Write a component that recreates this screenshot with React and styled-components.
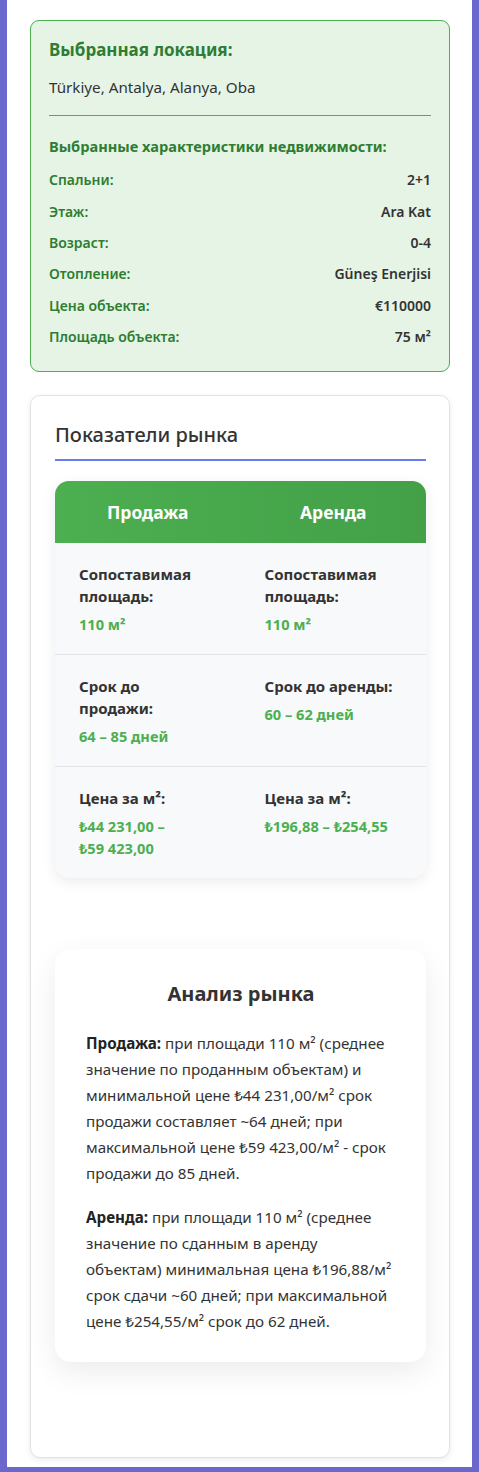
import React from 'react';
import styled, { createGlobalStyle } from 'styled-components';

const GlobalStyle = createGlobalStyle`
    html, body {
        margin: 0;
        padding: 0;
        background: #6a68cc;
    }
    body {
        font-family: 'Noto Sans', 'Open Sans', sans-serif;
        color: #333;
    }
`;

const Page = styled.div`
    background: #fff;
    margin: 0 7px;
    padding: 20px 22px 9px 23px;
    min-height: 1437px;
`;

const SelectionBox = styled.section`
    background: #e6f4e6;
    border: 1px solid #4caf50;
    border-radius: 9px;
    padding: 17px 18px 19px;
    margin-bottom: 23px;
`;

const BoxTitle = styled.h3`
    margin: 0 0 12px;
    font-size: 17px;
    font-weight: 700;
    color: #2e7d32;
    line-height: 24px;
`;

const LocationText = styled.p`
    margin: 0 0 15px;
    font-size: 15.2px;
    line-height: 26px;
    color: #333;
`;

const Divider = styled.hr`
    border: none;
    border-top: 1px solid #4caf50;
    margin: 0 0 19px;
`;

const SubTitle = styled.h4`
    margin: 0 0 7px;
    font-size: 14.6px;
    font-weight: 700;
    color: #2e7d32;
    line-height: 22px;
`;

const SpecRow = styled.div`
    display: flex;
    justify-content: space-between;
    align-items: center;
    height: 31.4px;
    font-size: 14px;
    font-weight: 600;
`;

const SpecLabel = styled.span`
    color: #2e7d32;
`;

const SpecValue = styled.span`
    color: #333;
`;

const MarketCard = styled.section`
    background: #fff;
    border: 1px solid #e2e2e2;
    border-radius: 10px;
    box-shadow: 0 2px 6px rgba(0, 0, 0, 0.08);
    padding: 24px 23px 95px 24px;
`;

const SectionTitle = styled.h2`
    margin: 0 0 20px;
    padding-bottom: 9px;
    border-bottom: 2px solid #667eea;
    font-size: 20px;
    font-weight: 500;
    line-height: 30px;
    color: #333;
`;

const Table = styled.div`
    border-radius: 14px;
    overflow: hidden;
    background: #f8f9fa;
    box-shadow: 0 4px 14px rgba(0, 0, 0, 0.08);
`;

const TableHead = styled.div`
    display: grid;
    grid-template-columns: 1fr 1fr;
    height: 62px;
    align-items: center;
    background: linear-gradient(90deg, #4caf50, #43a047);
`;

const HeadCell = styled.div`
    text-align: center;
    color: #fff;
    font-size: 17.5px;
    font-weight: 700;
`;

const TableRow = styled.div`
    display: grid;
    grid-template-columns: 1fr 1fr;
    border-top: ${(p) => (p.$first ? 'none' : '1px solid #e3e5e8')};
`;

const Cell = styled.div`
    padding: 20px 24px 19px 24px;
`;

const CellLabel = styled.div`
    font-size: 15px;
    font-weight: 700;
    line-height: 22px;
    color: #333;
`;

const CellValue = styled.div`
    margin-top: 6px;
    font-size: 14.6px;
    font-weight: 700;
    line-height: 22px;
    color: #4caf50;
`;

const AnalysisCard = styled.div`
    margin-top: 71px;
    background: #fff;
    border-radius: 16px;
    box-shadow: 0 10px 30px rgba(0, 0, 0, 0.08);
    padding: 30px 30px 28px 31px;
`;

const AnalysisTitle = styled.h3`
    margin: 0 0 21px;
    text-align: center;
    font-size: 20px;
    font-weight: 700;
    line-height: 30px;
    color: #333;
`;

const Paragraph = styled.p`
    margin: 0 0 18px;
    font-size: 15.2px;
    line-height: 26px;
    color: #333;

    &:last-child {
        margin-bottom: 0;
    }

    strong {
        font-weight: 700;
        color: #222;
    }
`;

const specs = [
    ['Спальни:', '2+1'],
    ['Этаж:', 'Ara Kat'],
    ['Возраст:', '0-4'],
    ['Отопление:', 'Güneş Enerjisi'],
    ['Цена объекта:', '€110000'],
    ['Площадь объекта:', '75 м²'],
];

const rows = [
    [
        { label: 'Сопоставимая площадь:', value: '110 м²' },
        { label: 'Сопоставимая площадь:', value: '110 м²' },
    ],
    [
        { label: 'Срок до продажи:', value: '64 – 85 дней' },
        { label: 'Срок до аренды:', value: '60 – 62 дней' },
    ],
    [
        { label: 'Цена за м²:', value: '₺44\u00A0231,00 – ₺59\u00A0423,00' },
        { label: 'Цена за м²:', value: '₺196,88 – ₺254,55' },
    ],
];

const App = () => {
    return (
        <>
            <GlobalStyle />
            <Page>
                <SelectionBox>
                    <BoxTitle>Выбранная локация:</BoxTitle>
                    <LocationText>Türkiye, Antalya, Alanya, Oba</LocationText>
                    <Divider />
                    <SubTitle>Выбранные характеристики недвижимости:</SubTitle>
                    {specs.map(([label, value]) => (
                        <SpecRow key={label}>
                            <SpecLabel>{label}</SpecLabel>
                            <SpecValue>{value}</SpecValue>
                        </SpecRow>
                    ))}
                </SelectionBox>

                <MarketCard>
                    <SectionTitle>Показатели рынка</SectionTitle>
                    <Table>
                        <TableHead>
                            <HeadCell>Продажа</HeadCell>
                            <HeadCell>Аренда</HeadCell>
                        </TableHead>
                        {rows.map((row, i) => (
                            <TableRow key={i} $first={i === 0}>
                                {row.map((cell, j) => (
                                    <Cell key={j}>
                                        <CellLabel>{cell.label}</CellLabel>
                                        <CellValue>{cell.value}</CellValue>
                                    </Cell>
                                ))}
                            </TableRow>
                        ))}
                    </Table>

                    <AnalysisCard>
                        <AnalysisTitle>Анализ рынка</AnalysisTitle>
                        <Paragraph>
                            <strong>Продажа:</strong> при площади 110 м² (среднее значение по проданным объектам) и минимальной цене ₺44&nbsp;231,00/м² срок продажи составляет ~64 дней; при максимальной цене ₺59&nbsp;423,00/м² - срок продажи до 85 дней.
                        </Paragraph>
                        <Paragraph>
                            <strong>Аренда:</strong> при площади 110 м² (среднее значение по сданным в аренду объектам) минимальная цена ₺196,88/м² срок сдачи ~60 дней; при максимальной цене ₺254,55/м² срок до 62 дней.
                        </Paragraph>
                    </AnalysisCard>
                </MarketCard>
            </Page>
        </>
    );
};

export default App;
